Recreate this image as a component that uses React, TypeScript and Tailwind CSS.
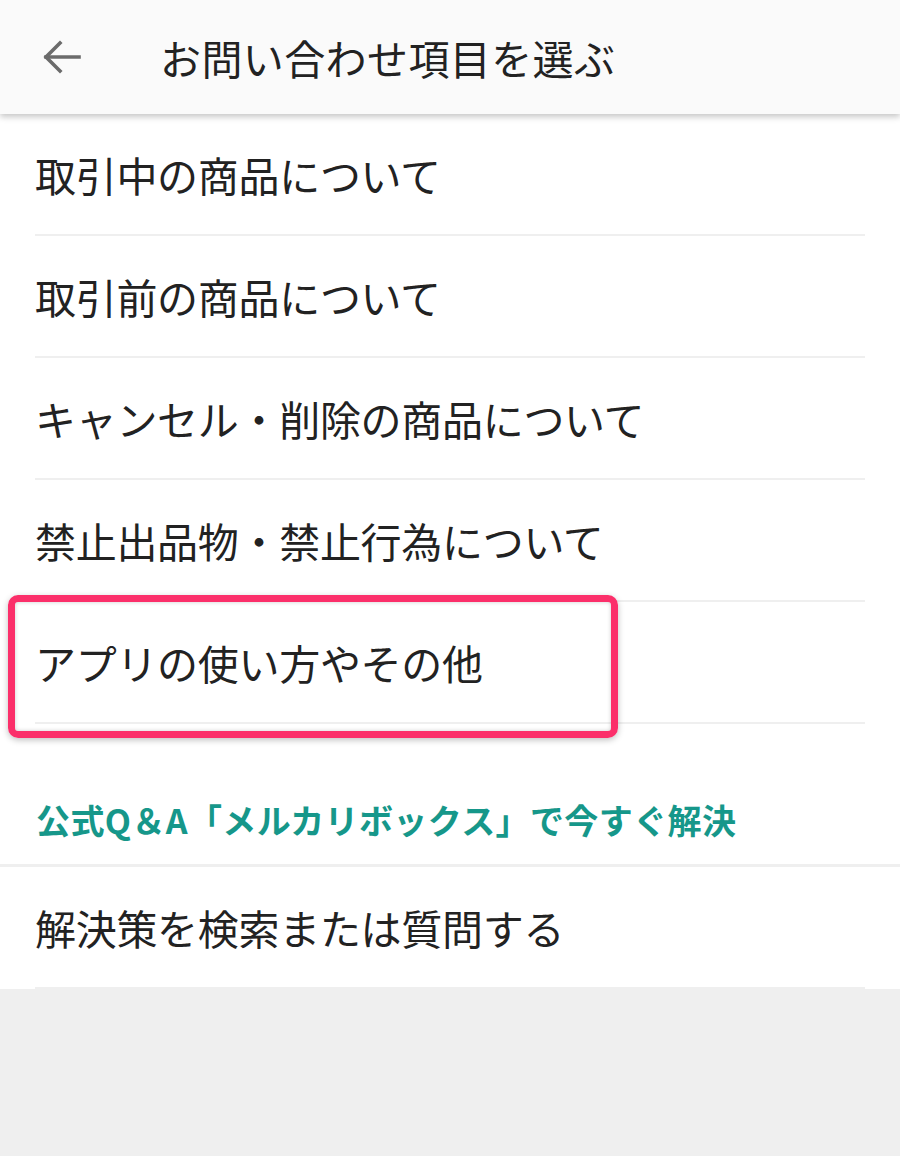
const items = [
  "取引中の商品について",
  "取引前の商品について",
  "キャンセル・削除の商品について",
  "禁止出品物・禁止行為について",
  "アプリの使い方やその他",
];

const Row = ({ label }: { label: string }) => (
  <div className="mx-[35px] h-[122px] border-b-2 border-[#efefef] flex items-center">
    <span className="text-[41px] leading-none text-[#222222] tracking-[-0.3px]">{label}</span>
  </div>
);

export default function App() {
  return (
    <div
      className="min-h-[1156px] bg-[#efefef]"
      style={{ fontFamily: '"Noto Sans CJK JP", "Noto Sans", sans-serif' }}
    >
      {/* header */}
      <div className="relative z-10 h-[114px] bg-[#fafafa] flex items-center shadow-[0_3px_6px_rgba(0,0,0,0.22)]">
        <svg
          className="ml-[42px]"
          width="40"
          height="36"
          viewBox="0 0 40 36"
          fill="none"
          stroke="#6b6b6b"
          strokeWidth="3.6"
          strokeLinecap="square"
        >
          <path d="M4 18h33" />
          <path d="M18 4L4 18l14 14" />
        </svg>
        <h1 className="ml-[78px] text-[41px] leading-none text-[#222222] font-normal tracking-[0.4px]">
          お問い合わせ項目を選ぶ
        </h1>
      </div>

      <div className="relative bg-white">
        {items.map((label) => (
          <Row key={label} label={label} />
        ))}

        <div className="px-[36px] pt-[79px] pb-[25px]">
          <span className="text-[34px] leading-[34px] font-bold text-[#16978a] tracking-[0.4px]">
            公式Q＆A「メルカリボックス」で今すぐ解決
          </span>
        </div>
        <div className="h-[3px] bg-[#efefef]" />
        <Row label="解決策を検索または質問する" />

        {/* highlight frame */}
        <div className="absolute left-[8px] top-[481px] w-[610px] h-[143px] rounded-[10px] border-[7px] border-[#fb2f6a] shadow-[0_2px_6px_rgba(0,0,0,0.25),inset_0_0_4px_rgba(0,0,0,0.2)]" />
      </div>
    </div>
  );
}
